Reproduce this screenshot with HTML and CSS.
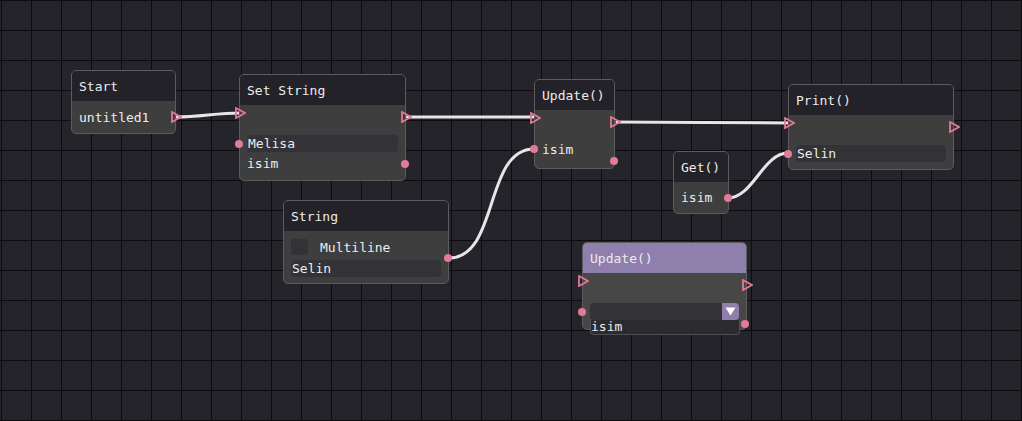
FILE: index.html
```html
<!DOCTYPE html>
<html>
<head>
<meta charset="utf-8">
<link rel="stylesheet" href="styles.css">
</head>
<body>
<div class="canvas">
  <svg class="wires" width="1022" height="421" viewBox="0 0 1022 421">
    <path d="M176 117 C200 117 216 113 240 113"/>
    <path d="M407 117 C460 117 484 117 537 117"/>
    <path d="M617 122 C680 122 727 123 790 123"/>
    <path d="M449 258 C499 258 484 149 534 149"/>
    <path d="M728 198 C753 198 763 153 788 153"/>
  </svg>

  <div class="node n-start">
    <div class="head">Start</div>
    <div class="body">
      <div class="row grow">untitled1<svg class="tri tri-out mid" viewBox="0 0 11 12"><path d="M1 1 L10 6 L1 11 Z"/></svg></div>
    </div>
  </div>

  <div class="node n-set">
    <div class="head">Set String</div>
    <div class="body">
      <div class="row exec">
        <svg class="tri tri-in" viewBox="0 0 11 12"><path d="M1 1 L10 6 L1 11 Z"/></svg>
        <svg class="tri tri-out" viewBox="0 0 11 12"><path d="M1 1 L10 6 L1 11 Z"/></svg>
      </div>
      <div class="row field">Melisa<span class="dot dot-in"></span></div>
      <div class="row h23">isim<span class="dot dot-out"></span></div>
    </div>
  </div>

  <div class="node n-upd">
    <div class="head">Update()</div>
    <div class="body">
      <div class="row exec">
        <svg class="tri tri-in" viewBox="0 0 11 12"><path d="M1 1 L10 6 L1 11 Z"/></svg>
        <svg class="tri tri-out" viewBox="0 0 11 12"><path d="M1 1 L10 6 L1 11 Z"/></svg>
      </div>
      <div class="row h18">isim<span class="dot dot-in"></span></div>
      <div class="row h6"><span class="dot dot-out"></span></div>
    </div>
  </div>

  <div class="node n-print">
    <div class="head">Print()</div>
    <div class="body">
      <div class="row exec">
        <svg class="tri tri-in" viewBox="0 0 11 12"><path d="M1 1 L10 6 L1 11 Z"/></svg>
        <svg class="tri tri-out" viewBox="0 0 11 12"><path d="M1 1 L10 6 L1 11 Z"/></svg>
      </div>
      <div class="row field">Selin<span class="dot dot-in"></span></div>
    </div>
  </div>

  <div class="node n-get">
    <div class="head">Get()</div>
    <div class="body">
      <div class="row grow">isim<span class="dot dot-out"></span></div>
    </div>
  </div>

  <div class="node n-string">
    <div class="head">String</div>
    <div class="body">
      <div class="row check-row"><span class="checkbox"></span>Multiline</div>
      <div class="row h5"><span class="dot dot-out"></span></div>
      <div class="row field">Selin</div>
    </div>
  </div>

  <div class="node n-upd2">
    <div class="head">Update()</div>
    <div class="body">
      <div class="row exec">
        <svg class="tri tri-in" viewBox="0 0 11 12"><path d="M1 1 L10 6 L1 11 Z"/></svg>
        <svg class="tri tri-out" viewBox="0 0 11 12"><path d="M1 1 L10 6 L1 11 Z"/></svg>
      </div>
      <div class="row select"><span class="dot dot-in"></span><span class="sel-btn"><svg viewBox="0 0 11 9"><path d="M0.5 0.5 L10.5 0.5 L5.5 8.5 Z"/></svg></span></div>
      <div class="row field2">isim<span class="dot dot-out top0"></span></div>
    </div>
  </div>
</div>
</body>
</html>
```

FILE: styles.css
```css
html, body {
  margin: 0;
  padding: 0;
}
body {
  width: 1022px;
  height: 421px;
  overflow: hidden;
  background-color: #25242a;
  background-image:
    linear-gradient(to right, #0c0c0f 1px, transparent 1px),
    linear-gradient(to bottom, #0c0c0f 1px, transparent 1px);
  background-size: 30px 30px;
  background-position: 1px 0;
  font-family: "DejaVu Sans Mono", "Liberation Mono", monospace;
  font-size: 13px;
  color: #ececec;
}
.canvas {
  position: relative;
  width: 1022px;
  height: 421px;
}
.wires {
  position: absolute;
  left: 0;
  top: 0;
}
.wires path {
  fill: none;
  stroke: #e8e4e8;
  stroke-width: 3;
  stroke-linecap: round;
}
.node {
  position: absolute;
  box-sizing: border-box;
  border: 1px solid #5c5c60;
  border-radius: 5px;
  background: #3e3e3e;
  display: flex;
  flex-direction: column;
}
.head {
  flex: 0 0 30px;
  background: #232228;
  border-radius: 4px 4px 0 0;
  padding: 0 7px;
  display: flex;
  align-items: center;
}
.body {
  flex: 1;
  padding: 0 7px;
  display: flex;
  flex-direction: column;
}
.row {
  position: relative;
  display: flex;
  align-items: center;
  flex-shrink: 0;
}
.grow { flex: 1; }
.exec { height: 30px; }
.h23 { height: 23px; }
.h18 { height: 18px; }
.h6 { height: 6px; }
.h5 { height: 5px; }
.field {
  height: 17px;
  background: #333237;
  border-radius: 4px;
  padding-left: 1px;
}
.check-row {
  height: 16px;
  margin-top: 8px;
}
.checkbox {
  width: 17px;
  height: 16px;
  background: #333237;
  border-radius: 3px;
  margin-right: 12px;
}
.select {
  height: 17px;
  background: #333237;
  border-radius: 4px;
  justify-content: flex-end;
}
.sel-btn {
  width: 17px;
  height: 17px;
  background: #8e7fad;
  border-radius: 0 4px 4px 0;
  display: flex;
  align-items: center;
  justify-content: center;
}
.sel-btn svg {
  width: 11px;
  height: 9px;
}
.sel-btn path { fill: #ffffff; }
.field2 {
  height: 14px;
  background: #2b2a2f;
  border: 1px solid #4e4e52;
  border-top: none;
  border-radius: 0 0 4px 4px;
  box-sizing: border-box;
  height: 15px;
  margin-right: -1px;
  line-height: 12px;
}

/* pins */
.tri {
  position: absolute;
  width: 11px;
  height: 12px;
}
.tri path {
  fill: none;
  stroke: #e27896;
  stroke-width: 1.8;
  stroke-linejoin: miter;
}
.tri-in { left: -12px; top: 2px; }
.tri-out { right: -14px; top: 6px; }
.tri-out.mid { top: 50%; transform: translateY(-50%); }
.dot {
  position: absolute;
  width: 8px;
  height: 8px;
  border-radius: 50%;
  background: #e27a98;
  top: 50%;
  transform: translateY(-50%);
}
.dot-in { left: -12px; }
.dot-out { right: -11px; }
.dot-out.top0 { top: 0; transform: none; right: -10px; }

/* node placements on the canvas */
.n-start { left: 71px; top: 70px; width: 105px; height: 64px; }
.n-set { left: 239px; top: 74px; width: 167px; height: 107px; }
.n-upd { left: 534px; top: 79px; width: 81px; height: 90px; }
.n-print { left: 788px; top: 84px; width: 166px; height: 86px; }
.n-get { left: 673px; top: 151px; width: 56px; height: 63px; }
.n-string { left: 283px; top: 200px; width: 166px; height: 84px; }
.n-upd2 { left: 582px; top: 242px; width: 165px; height: 88px; background: #474747; }
.n-upd2 .head { background: #8e7fad; }
```
